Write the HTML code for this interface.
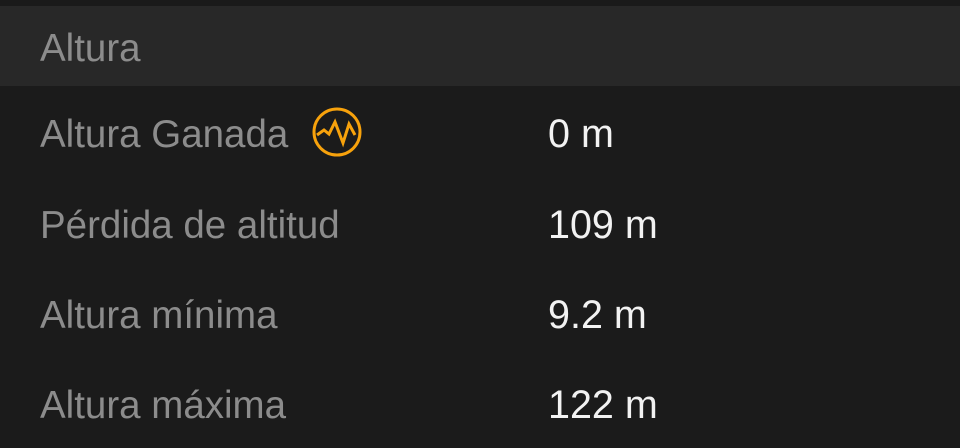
<!DOCTYPE html><html><head><style>
body{margin:0;width:960px;height:448px;background:#1b1b1b;overflow:hidden;font-family:"Liberation Sans",sans-serif;}
.top{position:absolute;left:0;top:0;width:960px;height:6px;background:#1a1a1a}
.hdr{position:absolute;left:0;top:6px;width:960px;height:80px;background:#282828}
.t{position:absolute;font-size:38.5px;color:#8c8c8c;line-height:1}
.v{position:absolute;left:548px;font-size:39.5px;color:#f2f2f2;line-height:1}
</style></head><body>
<div class="top"></div><div class="hdr"></div>
<div class="t" style="left:40px;top:30px">Altura</div>
<div class="t" style="left:40px;top:116px">Altura Ganada</div>
<svg style="position:absolute;left:300px;top:100px" width="80" height="65"><circle cx="37" cy="32" r="23" fill="none" stroke="#f7a20c" stroke-width="3"/><polyline points="17,35 24,30 29,34 35,22 43,43 49,24 55,35" fill="none" stroke="#f7a20c" stroke-width="3" stroke-linejoin="miter"/></svg>
<div class="v" style="top:115px">0 m</div>
<div class="t" style="left:40px;top:207px">Pérdida de altitud</div>
<div class="v" style="top:206px">109 m</div>
<div class="t" style="left:40px;top:297px">Altura mínima</div>
<div class="v" style="top:296px">9.2 m</div>
<div class="t" style="left:40px;top:387px">Altura máxima</div>
<div class="v" style="top:386px">122 m</div>
</body></html>
